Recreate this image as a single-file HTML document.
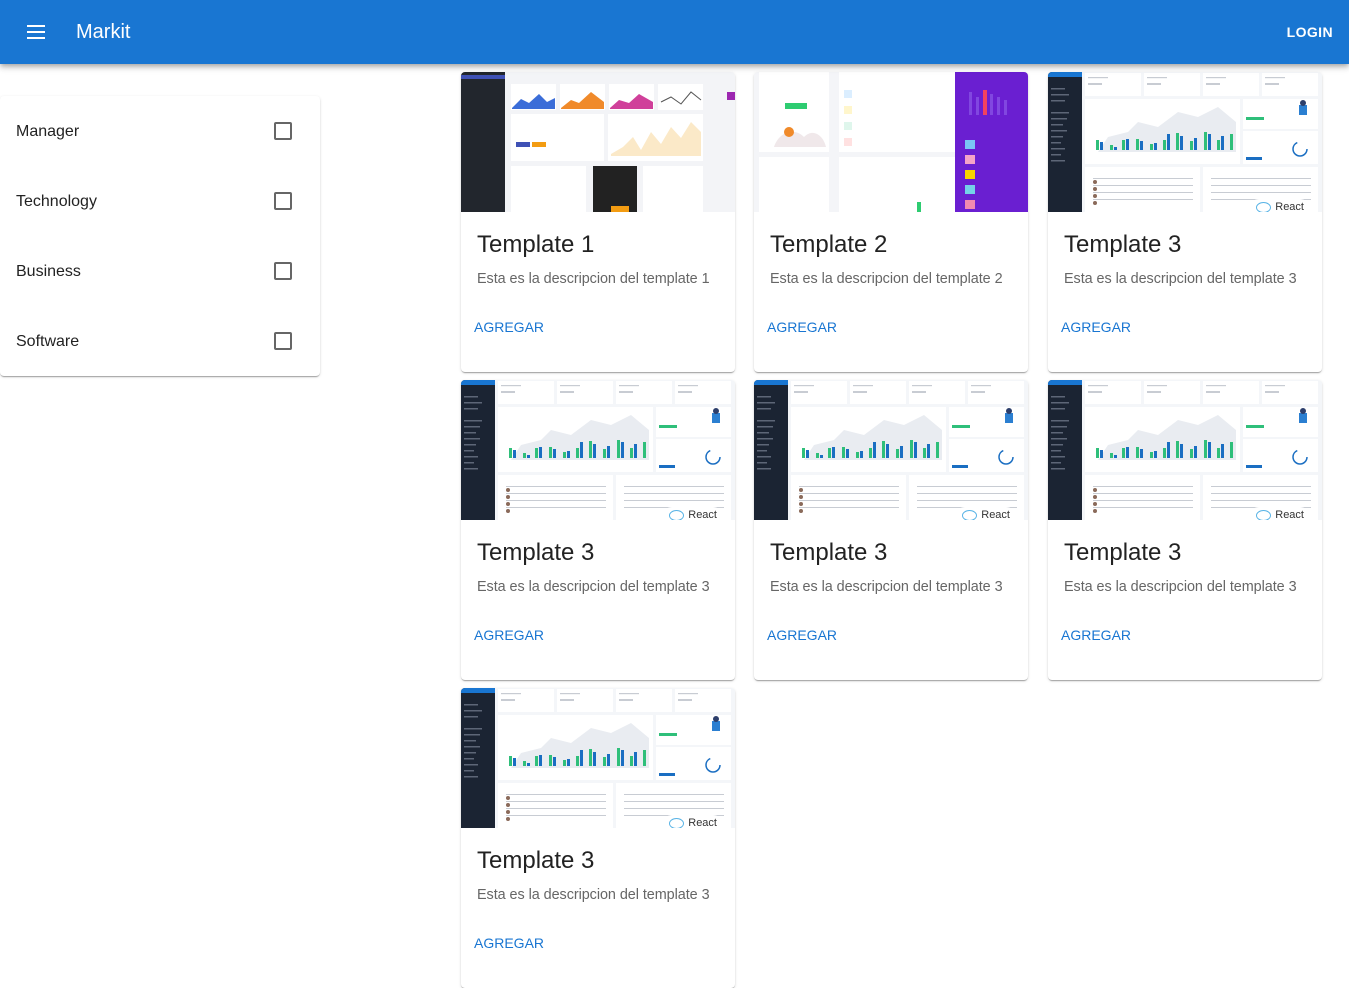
<!DOCTYPE html>
<html><head><meta charset="utf-8"><style>
*{box-sizing:border-box;margin:0;padding:0}
body{width:1349px;height:988px;overflow:hidden;background:#fff;font-family:"Liberation Sans",Arial,sans-serif;position:relative}
.bar{position:absolute;left:0;top:0;width:1349px;height:64px;background:#1976d2;box-shadow:0 2px 4px -1px rgba(0,0,0,.2),0 4px 5px rgba(0,0,0,.14),0 1px 10px rgba(0,0,0,.12);z-index:2}
.ham{position:absolute;left:27px;top:25px;width:18px;height:14px}
.ham i{display:block;height:2px;background:#fff;margin-bottom:4px}
.brand{position:absolute;left:76px;top:21px;color:#fff;font-size:20px;font-weight:500}
.login{position:absolute;right:16px;top:24px;color:#fff;font-size:14px;font-weight:bold;letter-spacing:.4px}
.side{position:absolute;left:0;top:96px;width:320px;height:280px;border-radius:4px;box-shadow:0 2px 1px -1px rgba(0,0,0,.2),0 1px 1px rgba(0,0,0,.14),0 1px 3px rgba(0,0,0,.12)}
.row{position:absolute;left:16px;font-size:16px;color:#222;margin-top:1px}
.cb{position:absolute;left:274px;width:18px;height:18px;border:2px solid #666;border-radius:2px}
.card{position:absolute;width:274px;height:300px;border-radius:4px;box-shadow:0 2px 1px -1px rgba(0,0,0,.2),0 1px 1px rgba(0,0,0,.14),0 1px 3px rgba(0,0,0,.12);overflow:hidden;background:#fff}
.img{position:absolute;left:0;top:0;width:274px;height:140px;overflow:hidden}
.t{position:absolute;left:16px;top:159px;font-size:24px;color:#222}
.d{position:absolute;left:16px;top:199px;font-size:14.4px;color:#666;letter-spacing:-.05px}
.a{position:absolute;left:13px;top:247px;font-size:14px;color:#1976d2;letter-spacing:0}
.react{position:absolute;right:12px;bottom:-3px;background:#fff;border-radius:10px 10px 0 0;padding:2px 6px 0 26px;font-size:11px;color:#333;height:16px}
.react:before{content:"";position:absolute;left:7px;top:3px;width:13px;height:9px;border:1px solid #5ab4e6;border-radius:50%}
</style></head><body>
<svg width="0" height="0" style="position:absolute">
<defs>
<symbol id="t3" viewBox="0 0 274 140">
<rect width="274" height="140" fill="#f4f6f9"/>
<rect width="34" height="140" fill="#1b2433"/>
<rect width="34" height="5" fill="#1976d2"/>
<g fill="#5d6677"><rect x="3" y="16" width="14" height="1.5"/><rect x="3" y="22" width="18" height="1.5"/><rect x="3" y="28" width="14" height="1.5"/><rect x="3" y="40" width="18" height="1.5"/><rect x="3" y="46" width="16" height="1.5"/><rect x="3" y="52" width="12" height="1.5"/><rect x="3" y="58" width="16" height="1.5"/><rect x="3" y="64" width="12" height="1.5"/><rect x="3" y="70" width="10" height="1.5"/><rect x="3" y="76" width="14" height="1.5"/><rect x="3" y="82" width="10" height="1.5"/><rect x="3" y="88" width="14" height="1.5"/></g>
<g fill="#fff"><rect x="37" y="1" width="56" height="23"/><rect x="96" y="1" width="56" height="23"/><rect x="155" y="1" width="56" height="23"/><rect x="214" y="1" width="56" height="23"/>
<rect x="37" y="27" width="155" height="65"/><rect x="195" y="27" width="75" height="30"/><rect x="195" y="59" width="75" height="33"/>
<rect x="37" y="95" width="115" height="45"/><rect x="155" y="95" width="115" height="45"/></g>
<path d="M50 80 L60 65 L80 60 L90 50 L110 55 L130 40 L150 45 L170 35 L188 50 L188 80Z" fill="#e9ecf1"/>
<g fill="#2fbf7a"><rect x="48" y="68" width="3" height="10"/><rect x="62" y="73" width="3" height="5"/><rect x="74" y="68" width="3" height="10"/><rect x="88" y="67" width="3" height="11"/><rect x="102" y="72" width="3" height="6"/><rect x="115" y="68" width="3" height="10"/><rect x="128" y="61" width="3" height="17"/><rect x="142" y="69" width="3" height="9"/><rect x="156" y="60" width="3" height="18"/><rect x="169" y="68" width="3" height="10"/><rect x="182" y="62" width="3" height="16"/></g>
<g fill="#1a6ec2"><rect x="52" y="70" width="3" height="8"/><rect x="66" y="75" width="3" height="3"/><rect x="78" y="67" width="3" height="11"/><rect x="92" y="69" width="3" height="9"/><rect x="106" y="71" width="3" height="7"/><rect x="119" y="62" width="3" height="16"/><rect x="132" y="64" width="3" height="14"/><rect x="146" y="66" width="3" height="12"/><rect x="160" y="62" width="3" height="16"/><rect x="173" y="64" width="3" height="14"/></g>
<rect x="198" y="45" width="18" height="3" fill="#2fbf7a"/><rect x="198" y="85" width="16" height="3" fill="#1a6ec2"/>
<circle cx="252" cy="77" r="7" fill="none" stroke="#1a6ec2" stroke-width="1.5" stroke-dasharray="30 14"/>
<rect x="251" y="33" width="8" height="10" fill="#2b7fd1"/><circle cx="255" cy="31" r="3" fill="#2c3e6b"/>
<g fill="#c8ccd3"><rect x="40" y="5" width="20" height="1.2"/><rect x="40" y="11" width="14" height="2"/><rect x="99" y="5" width="20" height="1.2"/><rect x="99" y="11" width="14" height="2"/><rect x="158" y="5" width="20" height="1.2"/><rect x="158" y="11" width="14" height="2"/><rect x="217" y="5" width="20" height="1.2"/><rect x="217" y="11" width="14" height="2"/>
<rect x="45" y="106" width="100" height="1"/><rect x="45" y="113" width="100" height="1"/><rect x="45" y="120" width="100" height="1"/><rect x="45" y="127" width="100" height="1"/><rect x="163" y="106" width="100" height="1"/><rect x="163" y="113" width="100" height="1"/><rect x="163" y="120" width="100" height="1"/><rect x="163" y="127" width="100" height="1"/></g>
<g fill="#8a6a5a"><circle cx="47" cy="110" r="2"/><circle cx="47" cy="117" r="2"/><circle cx="47" cy="124" r="2"/><circle cx="47" cy="131" r="2"/></g>
</symbol>
</defs></svg>

<div class="bar"><div class="ham"><i></i><i></i><i></i></div><div class="brand">Markit</div><div class="login">LOGIN</div></div>

<div class="side">
<div class="row" style="top:26px">Manager</div><div class="cb" style="top:26px"></div>
<div class="row" style="top:96px">Technology</div><div class="cb" style="top:96px"></div>
<div class="row" style="top:166px">Business</div><div class="cb" style="top:166px"></div>
<div class="row" style="top:236px">Software</div><div class="cb" style="top:236px"></div>
</div>

<div class="card" style="left:461px;top:72px"><div class="img">
<svg width="274" height="140" viewBox="0 0 274 140"><rect width="274" height="140" fill="#f3f4f7"/><rect width="44" height="140" fill="#22262d"/><rect x="0" y="3" width="44" height="4" fill="#3f51b5"/>
<rect x="50" y="12" width="45" height="26" fill="#fff"/><path d="M51 36 L60 27 L68 31 L78 22 L86 30 L94 26 L94 37 L51 37Z" fill="#3b6dd8"/>
<rect x="99" y="12" width="45" height="26" fill="#fff"/><path d="M100 36 L110 28 L118 31 L130 20 L143 30 L143 37 L100 37Z" fill="#f08a2a"/>
<rect x="148" y="12" width="45" height="26" fill="#fff"/><path d="M149 36 L158 28 L168 31 L178 22 L192 30 L192 37 L149 37Z" fill="#d0409a"/>
<rect x="197" y="12" width="45" height="26" fill="#fff"/><path d="M200 30 L210 25 L220 32 L230 20 L240 28" stroke="#555" fill="none"/>
<rect x="266" y="20" width="8" height="8" fill="#9c27b0"/>
<rect x="50" y="42" width="93" height="47" fill="#fff"/><rect x="55" y="70" width="14" height="5" fill="#3f51b5"/><rect x="71" y="70" width="14" height="5" fill="#f39c12"/>
<rect x="147" y="42" width="95" height="47" fill="#fff"/><path d="M150 82 L162 75 L172 65 L180 78 L190 60 L200 72 L210 55 L220 66 L230 50 L240 60 L240 84 L150 84Z" fill="#fbe9c8"/>
<rect x="50" y="94" width="75" height="46" fill="#fff"/><rect x="132" y="94" width="44" height="46" fill="#222"/><rect x="150" y="134" width="18" height="6" fill="#f39c12"/><rect x="182" y="94" width="60" height="46" fill="#fff"/></svg></div>
<div class="t">Template 1</div><div class="d">Esta es la descripcion del template 1</div><div class="a">AGREGAR</div></div>

<div class="card" style="left:754px;top:72px"><div class="img">
<svg width="274" height="140" viewBox="0 0 274 140"><rect width="274" height="140" fill="#f4f5f8"/><rect x="5" y="0" width="70" height="80" fill="#fff"/><rect x="31" y="31" width="22" height="6" fill="#2ecc71"/><path d="M20 75 C25 60 40 55 50 65 C60 55 70 65 72 75Z" fill="#f0e8ea"/><circle cx="35" cy="60" r="5" fill="#f08a2a"/>
<rect x="85" y="0" width="120" height="80" fill="#fff"/><rect x="90" y="18" width="8" height="8" fill="#dbeeff"/><rect x="90" y="34" width="8" height="8" fill="#fff6cc"/><rect x="90" y="50" width="8" height="8" fill="#dff6ec"/><rect x="90" y="66" width="8" height="8" fill="#ffe1e1"/>
<rect x="5" y="85" width="70" height="55" fill="#fff"/><rect x="85" y="85" width="120" height="55" fill="#fff"/><rect x="163" y="130" width="4" height="10" fill="#2ecc71"/>
<rect x="201" y="0" width="73" height="140" fill="#6a1fd1"/><rect x="229" y="18" width="4" height="25" fill="#f2425e"/><g fill="#8147e0"><rect x="215" y="20" width="3" height="23"/><rect x="222" y="25" width="3" height="18"/><rect x="236" y="22" width="3" height="21"/><rect x="243" y="25" width="3" height="18"/><rect x="250" y="28" width="3" height="15"/></g>
<rect x="211" y="68" width="10" height="9" fill="#7ac6f5"/><rect x="211" y="83" width="10" height="9" fill="#f5a3c8"/><rect x="211" y="98" width="10" height="9" fill="#f7d400"/><rect x="211" y="113" width="10" height="9" fill="#74d1e8"/><rect x="211" y="128" width="10" height="9" fill="#f08ab0"/></svg></div>
<div class="t">Template 2</div><div class="d">Esta es la descripcion del template 2</div><div class="a">AGREGAR</div></div>

<div class="card" style="left:1048px;top:72px"><div class="img"><svg width="274" height="140"><use href="#t3"/></svg><div class="react">React</div></div>
<div class="t">Template 3</div><div class="d">Esta es la descripcion del template 3</div><div class="a">AGREGAR</div></div>

<div class="card" style="left:461px;top:380px"><div class="img"><svg width="274" height="140"><use href="#t3"/></svg><div class="react">React</div></div>
<div class="t">Template 3</div><div class="d">Esta es la descripcion del template 3</div><div class="a">AGREGAR</div></div>
<div class="card" style="left:754px;top:380px"><div class="img"><svg width="274" height="140"><use href="#t3"/></svg><div class="react">React</div></div>
<div class="t">Template 3</div><div class="d">Esta es la descripcion del template 3</div><div class="a">AGREGAR</div></div>
<div class="card" style="left:1048px;top:380px"><div class="img"><svg width="274" height="140"><use href="#t3"/></svg><div class="react">React</div></div>
<div class="t">Template 3</div><div class="d">Esta es la descripcion del template 3</div><div class="a">AGREGAR</div></div>

<div class="card" style="left:461px;top:688px"><div class="img"><svg width="274" height="140"><use href="#t3"/></svg><div class="react">React</div></div>
<div class="t">Template 3</div><div class="d">Esta es la descripcion del template 3</div><div class="a">AGREGAR</div></div>
</body></html>
